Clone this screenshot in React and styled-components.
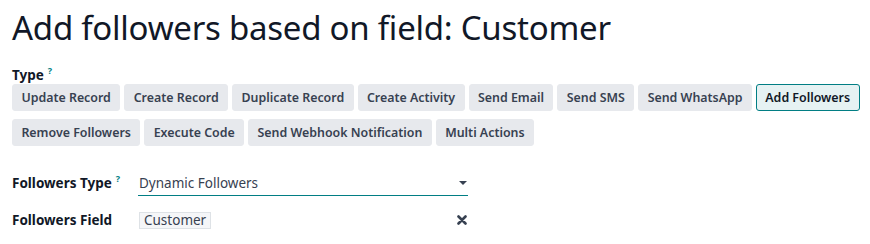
import React from "react";
import styled, { createGlobalStyle } from "styled-components";

const GlobalStyle = createGlobalStyle`
  body {
    margin: 0;
    background: #ffffff;
    font-family: "Noto Sans", "Open Sans", sans-serif;
    color: #374151;
  }
`;

const Page = styled.div`
  padding: 6px 0 0 12px;
  width: 870px;
  box-sizing: border-box;
`;

const Title = styled.h1`
  margin: 0 0 16px 0;
  font-size: 33px;
  font-weight: 400;
  color: #111827;
  line-height: 44px;
  letter-spacing: -0.25px;
`;

const Label = styled.div`
  font-size: 13.5px;
  font-weight: 700;
  color: #111827;
  line-height: 18px;
`;

const Help = styled.span`
  color: #017e84;
  font-size: 9px;
  font-weight: 700;
  margin-left: 4px;
  line-height: 0;
  position: relative;
  top: -6px;
`;

const Choices = styled.div`
  display: flex;
  flex-wrap: wrap;
  gap: 8px 4px;
  max-width: 852px;
`;

const Choice = styled.button`
  margin: 0;
  font-family: inherit;
  font-size: 12.4px;
  font-weight: 600;
  height: 27px;
  padding: 0 8.4px;
  border-radius: 3px;
  border: 1px solid ${(p) => (p.$active ? "#017e84" : "#e7e9ed")};
  background: ${(p) => (p.$active ? "#e6f2f3" : "#e7e9ed")};
  color: ${(p) => (p.$active ? "#111827" : "#374151")};
  cursor: pointer;
`;

const Fields = styled.div`
  display: grid;
  grid-template-columns: 126px 330px;
  row-gap: 12px;
  margin-top: 25px;
  align-items: center;
`;

const FieldLabel = styled(Label)`
  align-self: start;
  padding-top: 3px;
`;

const Select = styled.div`
  display: flex;
  align-items: center;
  justify-content: space-between;
  height: 24px;
  border-bottom: 1px solid #017e84;
  font-size: 13.5px;
  color: #374151;
  padding-left: 1px;
`;

const Caret = styled.span`
  width: 0;
  height: 0;
  border-left: 4px solid transparent;
  border-right: 4px solid transparent;
  border-top: 4px solid #374151;
  margin-right: 1px;
`;

const Many2One = styled.div`
  display: flex;
  align-items: center;
  justify-content: space-between;
  height: 24px;
`;

const Tag = styled.span`
  font-size: 13.5px;
  line-height: 15px;
  padding: 0 4px;
  border: 1px solid #dee2e6;
  background: #f5f6f8;
  color: #374151;
  margin-left: 1px;
`;

const Clear = styled.svg`
  width: 10px;
  height: 10px;
  margin-right: 1px;
`;

const types = [
  "Update Record",
  "Create Record",
  "Duplicate Record",
  "Create Activity",
  "Send Email",
  "Send SMS",
  "Send WhatsApp",
  "Add Followers",
  "Remove Followers",
  "Execute Code",
  "Send Webhook Notification",
  "Multi Actions",
];

export default function App() {
  return (
    <>
      <GlobalStyle />
      <Page>
        <Title>Add followers based on field: Customer</Title>
        <Label>
          Type<Help>?</Help>
        </Label>
        <Choices>
          {types.map((t) => (
            <Choice key={t} $active={t === "Add Followers"}>
              {t}
            </Choice>
          ))}
        </Choices>
        <Fields>
          <FieldLabel>
            Followers Type<Help>?</Help>
          </FieldLabel>
          <Select>
            Dynamic Followers
            <Caret />
          </Select>
          <FieldLabel>Followers Field</FieldLabel>
          <Many2One>
            <Tag>Customer</Tag>
            <Clear viewBox="0 0 10 10">
              <path d="M1.5 1.5 L8.5 8.5 M8.5 1.5 L1.5 8.5" stroke="#374151" strokeWidth="2.6" strokeLinecap="round" />
            </Clear>
          </Many2One>
        </Fields>
      </Page>
    </>
  );
}
